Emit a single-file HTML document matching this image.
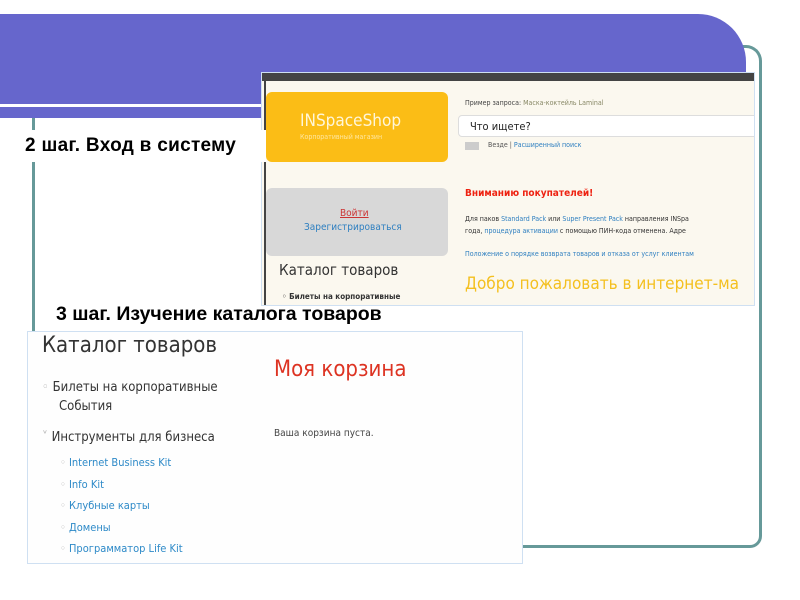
<!DOCTYPE html>
<html><head><meta charset="utf-8"><style>
*{margin:0;padding:0;box-sizing:border-box}
body{width:800px;height:600px;background:#fff;position:relative;overflow:hidden;font-family:"Liberation Sans","DejaVu Sans",sans-serif}
.a{position:absolute}
.sa{font-family:"DejaVu Sans Condensed","DejaVu Sans","Liberation Sans",sans-serif}
</style></head><body>
<div class="a" style="left:700px;top:45px;width:62px;height:503px;border:3px solid #669999;border-left:none;border-radius:0 16px 12px 0"></div>
<div class="a" style="left:0;top:14px;width:746px;height:104px;background:#6666cc;border-top-right-radius:48px"></div>
<div class="a" style="left:0;top:104px;width:262px;height:3px;background:#fff"></div>
<div class="a" style="left:32px;top:118px;width:3px;height:430px;background:#669999"></div>
<div class="a" style="left:32px;top:545px;width:700px;height:3px;background:#669999"></div>

<!-- screenshot 1 -->
<div class="a sa" style="left:261px;top:72px;width:494px;height:234px;background:#fbf8ef;border:1px solid #cfe0f2;overflow:hidden">
 <div class="a" style="left:0;top:0;width:494px;height:8px;background:#444"></div>
 <div class="a" style="left:2px;top:8px;width:2px;height:226px;background:#444"></div>
 <div class="a" style="left:4px;top:19px;width:182px;height:70px;background:#fbbd16;border-radius:6px"></div>
 <div class="a" style="left:38px;top:38px;color:#fff6d8;font-size:17px">INSpaceShop</div>
 <div class="a" style="left:38px;top:60px;color:#ffe7a0;font-size:7px">Корпоративный магазин</div>
 <div class="a" style="left:4px;top:115px;width:182px;height:68px;background:#d8d8d8;border-radius:6px"></div>
 <div class="a" style="left:78px;top:135px;color:#c33;font-size:10px;text-decoration:underline">Войти</div>
 <div class="a" style="left:42px;top:149px;color:#2e7fc0;font-size:10px">Зарегистрироваться</div>
 <div class="a" style="left:17px;top:188px;color:#333;font-size:15px">Каталог товаров</div>
 <div class="a" style="left:20px;top:219px;color:#333;font-size:8px;font-weight:bold">◦ Билеты на корпоративные</div>
 <div class="a" style="left:203px;top:26px;color:#444;font-size:7px">Пример запроса: <span style="color:#886">Маска-коктейль Laminal</span></div>
 <div class="a" style="left:196px;top:42px;width:300px;height:22px;background:#fff;border:1px solid #ddd;border-radius:4px"></div>
 <div class="a" style="left:208px;top:47px;color:#222;font-size:11px">Что ищете?</div>
 <div class="a" style="left:203px;top:69px;width:14px;height:8px;background:#ccc"></div>
 <div class="a" style="left:226px;top:68px;color:#555;font-size:7px">Везде | <span style="color:#2e7fc0">Расширенный поиск</span></div>
 <div class="a" style="left:203px;top:115px;color:#e21;font-size:10px;font-weight:bold">Вниманию покупателей!</div>
 <div class="a" style="left:203px;top:140px;color:#333;font-size:7px;white-space:nowrap;line-height:12px">Для паков <span style="color:#2e7fc0">Standard Pack</span> или <span style="color:#2e7fc0">Super Present Pack</span> направления INSpa<br>года, <span style="color:#2e7fc0">процедура активации</span> с помощью ПИН-кода отменена. Адре</div>
 <div class="a" style="left:203px;top:177px;color:#2e7fc0;font-size:7px;white-space:nowrap">Положение о порядке возврата товаров и отказа от услуг клиентам</div>
 <div class="a" style="left:203px;top:201px;color:#f4c020;font-size:17px;white-space:nowrap">Добро пожаловать в интернет-ма</div>
</div>
<div class="a" style="left:15px;top:130px;width:251px;height:32px;background:#fff"></div>
<div class="a" style="left:25px;top:135px;font-size:19px;font-weight:bold;color:#000;letter-spacing:0.3px">2 шаг. Вход в систему</div>
<div class="a" style="left:56px;top:303px;font-size:19.5px;font-weight:bold;color:#000">3 шаг. Изучение каталога товаров</div>

<!-- screenshot 2 -->
<div class="a sa" style="left:27px;top:331px;width:496px;height:233px;background:#fefefe;border:1px solid #cfe0f2;overflow:hidden">
 <div class="a" style="left:14px;top:1px;color:#333;font-size:22px">Каталог товаров</div>
 <div class="a" style="left:246px;top:25px;color:#d32;font-size:22px">Моя корзина</div>
 <div class="a" style="left:14px;top:48px;color:#333;font-size:13px"><span style="color:#bbb">◦</span>&nbsp;Билеты на корпоративные</div>
 <div class="a" style="left:31px;top:67px;color:#333;font-size:13px">События</div>
 <div class="a" style="left:14px;top:98px;color:#333;font-size:13px"><span style="color:#bbb">˅</span> Инструменты для бизнеса</div>
 <div class="a" style="left:246px;top:96px;color:#444;font-size:10px">Ваша корзина пуста.</div>
 <div class="a" style="left:32px;top:120px;color:#2e8ac8;font-size:11px;line-height:21.5px"><span style="color:#bbb">◦</span> Internet Business Kit<br><span style="color:#bbb">◦</span> Info Kit<br><span style="color:#bbb">◦</span> Клубные карты<br><span style="color:#bbb">◦</span> Домены<br><span style="color:#bbb">◦</span> Программатор Life Kit</div>
</div>
</body></html>
